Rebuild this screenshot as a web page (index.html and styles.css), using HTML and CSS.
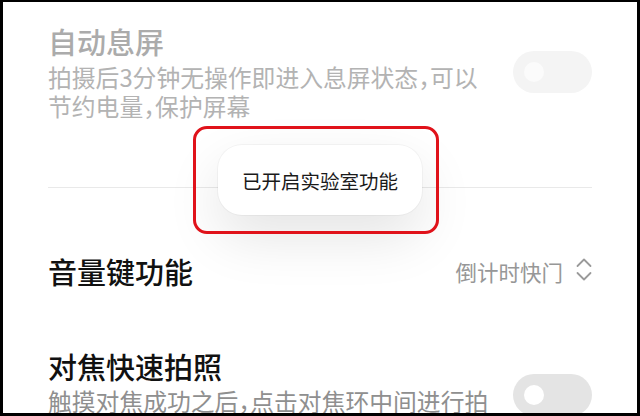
FILE: index.html
```html
<!DOCTYPE html>
<html lang="zh-CN">
<head>
<meta charset="utf-8">
<title>实验室功能</title>
<link rel="stylesheet" href="styles.css">
</head>
<body>
<div class="screen">
  <div class="content">
    <section class="setting disabled">
      <div class="text">
        <div class="title">自动息屏</div>
        <p class="desc">拍摄后3分钟无操作即进入息屏状态，可以节约电量，保护屏幕</p>
      </div>
      <span class="switch switch-first"><span class="knob"></span></span>
    </section>
    <hr class="divider">
    <section class="setting option">
      <div class="title">音量键功能</div>
      <div class="value">
        <span>倒计时快门</span>
        <svg class="updown" width="16" height="25" viewBox="0 0 16 25" aria-hidden="true">
          <path d="M1.5 9 L8 2.5 L14.5 9" />
          <path d="M1.5 16 L8 22.5 L14.5 16" />
        </svg>
      </div>
    </section>
    <section class="setting setting-last">
      <div class="text">
        <div class="title">对焦快速拍照</div>
        <p class="desc">触摸对焦成功之后，点击对焦环中间进行拍照，无需再按快门键</p>
      </div>
      <span class="switch switch-last"><span class="knob"></span></span>
    </section>
  </div>
  <div class="toast">已开启实验室功能</div>
  <div class="highlight"></div>
</div>
</body>
</html>
```

FILE: styles.css
```css
html, body {
  margin: 0;
  padding: 0;
  background: #000;
}

.screen {
  position: relative;
  box-sizing: border-box;
  width: 640px;
  height: 416px;
  border-style: solid;
  border-color: #000;
  border-width: 2px 3px 3px 3px;
  background: #fff;
  overflow: hidden;
  font-family: "Noto Sans CJK SC", "Noto Sans", sans-serif;
}

.content {
  padding: 18px 45px 0 45px;
}

.setting {
  display: flex;
  align-items: flex-start;
  justify-content: space-between;
}

.text {
  width: 450px;
}

.title {
  font-size: 29px;
  line-height: 42px;
  font-weight: 500;
  color: #111;
}

.desc {
  margin: 0;
  font-size: 23.8px;
  line-height: 29px;
  color: #8f8f8f;
  font-feature-settings: "halt";
}

.disabled .title {
  color: #ababab;
}

.disabled .desc {
  color: #b3b3b3;
}

.switch {
  position: relative;
  flex: 0 0 auto;
  width: 79px;
  height: 42px;
  border-radius: 21px;
  background: #e4e4e4;
}

.knob {
  position: absolute;
  left: 11px;
  top: 11px;
  width: 20px;
  height: 20px;
  border-radius: 50%;
  background: #fff;
}

.switch-first {
  margin-top: 31px;
  background: #f4f4f4;
}

.switch-first .knob {
  background: #fbfbfb;
}

.divider {
  margin: 67px 0 0 0;
  border: 0;
  height: 1px;
  background: #e9e9e9;
}

.option {
  margin-top: 63px;
  align-items: center;
}

.option .title {
  line-height: 40px;
}

.value {
  display: flex;
  align-items: center;
  gap: 13px;
  font-size: 21.5px;
  color: #979797;
}

.updown {
  margin-top: -3px;
}

.updown path {
  fill: none;
  stroke: #9a9a9a;
  stroke-width: 1.8;
  stroke-linecap: round;
  stroke-linejoin: round;
}

.setting-last {
  margin-top: 55px;
}

.setting-last .title {
  line-height: 40px;
}

.switch-last {
  margin-top: 28px;
}

.toast {
  position: absolute;
  top: 143px;
  left: 50%;
  transform: translateX(-50%);
  box-sizing: border-box;
  height: 70px;
  padding: 0 24px;
  display: flex;
  align-items: center;
  border-radius: 24px;
  background: #fff;
  white-space: nowrap;
  font-size: 19.5px;
  color: #1a1a1a;
  box-shadow: 0 0 0 1px rgba(0, 0, 0, 0.035), 0 22px 55px rgba(0, 0, 0, 0.11);
}

.highlight {
  position: absolute;
  left: 190px;
  top: 124px;
  box-sizing: border-box;
  width: 246px;
  height: 108px;
  border: 3px solid #e0121a;
  border-radius: 14px;
}
```
